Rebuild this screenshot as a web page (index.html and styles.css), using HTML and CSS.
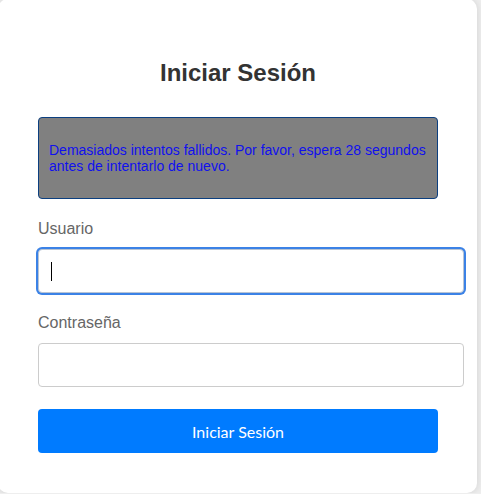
FILE: index.html
```html
<!DOCTYPE html>
<html lang="es">
<head>
<meta charset="utf-8">
<title>Iniciar Sesión</title>
<link rel="stylesheet" href="styles.css">
</head>
<body>
<div class="card">
  <h2 class="title">Iniciar Sesión</h2>
  <div class="alert">
    <p>Demasiados intentos fallidos. Por favor, espera 28 segundos antes de intentarlo de nuevo.</p>
  </div>
  <form class="form">
    <div class="group">
      <label class="label" for="user">Usuario</label>
      <div class="field">
        <input class="input input-focus" id="user" type="text">
        <span class="caret"></span>
      </div>
    </div>
    <div class="group">
      <label class="label" for="pass">Contraseña</label>
      <input class="input" id="pass" type="password">
    </div>
    <button class="btn" type="button">Iniciar Sesión</button>
  </form>
</div>
</body>
</html>
```

FILE: styles.css
```css
html, body {
  margin: 0;
  padding: 0;
  background: #eeeeee;
  font-family: "Liberation Sans", Arial, sans-serif;
  overflow: hidden;
}

.card {
  box-sizing: border-box;
  width: 479px;
  margin: -1px 0 0 -2px;
  padding: 40px 39px 40px 40px;
  background: #ffffff;
  border-radius: 10px;
  box-shadow: 0 0 8px rgba(0, 0, 0, 0.12);
}

.title {
  margin: 20px 0 30px;
  text-align: center;
  font-size: 24px;
  font-weight: bold;
  color: #333333;
}

.alert {
  width: 400px;
  box-sizing: border-box;
  padding: 10px;
  background: #808080;
  border: 1px solid #0b3f80;
  border-radius: 4px;
  color: #1010ee;
  font-size: 14px;
}

.alert p {
  margin: 14px 0;
}

.form {
  margin-top: 21px;
}

.group {
  margin-bottom: 21px;
}

.label {
  display: block;
  margin-bottom: 11px;
  font-size: 16px;
  color: #666666;
}

.field {
  position: relative;
}

.input {
  display: block;
  box-sizing: border-box;
  width: 426px;
  height: 44px;
  padding: 12px;
  border: 1px solid #cccccc;
  border-radius: 4px;
  font-family: "Liberation Sans", Arial, sans-serif;
  font-size: 16px;
  background: #ffffff;
  outline: none;
}

.input-focus {
  box-shadow: 0 0 0 2px #3b82e6;
  border-color: #b8c4d4;
}

.caret {
  position: absolute;
  left: 13px;
  top: 13px;
  width: 1px;
  height: 19px;
  background: #000000;
}

.btn {
  display: block;
  width: 400px;
  height: 44px;
  margin-top: 22px;
  border: none;
  border-radius: 4px;
  background: #007bff;
  color: #ffffff;
  font-family: Lato, sans-serif;
  font-size: 16px;
}
```
